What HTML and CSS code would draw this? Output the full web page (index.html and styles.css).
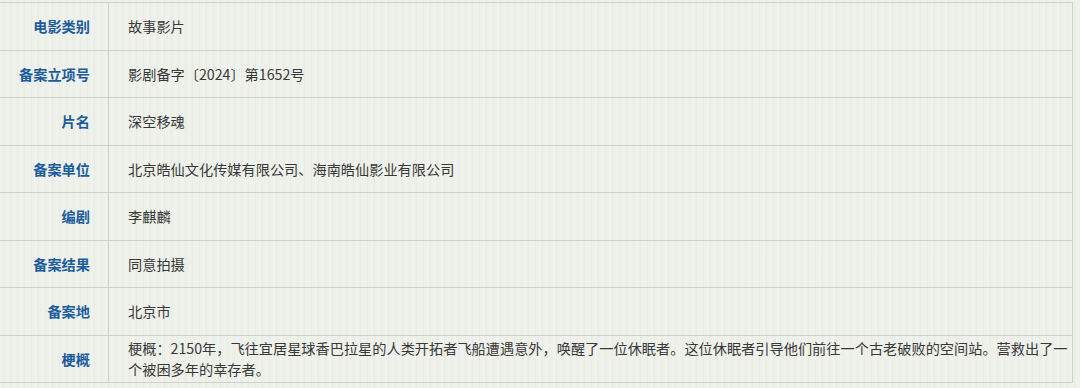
FILE: index.html
```html
<!DOCTYPE html>
<html lang="zh-CN">
<head>
<meta charset="utf-8">
<title>电影备案信息</title>
<link rel="stylesheet" href="styles.css">
</head>
<body>
<div class="page">
  <table class="info">
    <tbody>
      <tr><th class="label">电影类别</th><td class="value">故事影片</td></tr>
      <tr><th class="label">备案立项号</th><td class="value">影剧备字〔2024〕第1652号</td></tr>
      <tr><th class="label">片名</th><td class="value">深空移魂</td></tr>
      <tr><th class="label">备案单位</th><td class="value">北京皓仙文化传媒有限公司、海南皓仙影业有限公司</td></tr>
      <tr><th class="label">编剧</th><td class="value">李麒麟</td></tr>
      <tr><th class="label">备案结果</th><td class="value">同意拍摄</td></tr>
      <tr><th class="label">备案地</th><td class="value">北京市</td></tr>
      <tr><th class="label">梗概</th><td class="value">梗概：2150年，飞往宜居星球香巴拉星的人类开拓者飞船遭遇意外，唤醒了一位休眠者。这位休眠者引导他们前往一个古老破败的空间站。营救出了一个被困多年的幸存者。</td></tr>
    </tbody>
  </table>
</div>
</body>
</html>
```

FILE: styles.css
```css
html, body {
  margin: 0;
  padding: 0;
}

body {
  width: 1080px;
  height: 388px;
  overflow: hidden;
  background-color: #eef0ea;
  background-image:
    repeating-linear-gradient(90deg,
      rgba(255,255,255,0.18) 0px, rgba(255,255,255,0.18) 1px,
      rgba(0,0,0,0) 1px, rgba(0,0,0,0) 3px,
      rgba(200,205,195,0.12) 3px, rgba(200,205,195,0.12) 4px,
      rgba(0,0,0,0) 4px, rgba(0,0,0,0) 7px);
  font-family: "Noto Sans CJK SC", "Liberation Sans", sans-serif;
}

.page {
  padding-top: 2px;
  margin-left: -1px;
}

.info {
  border-collapse: collapse;
  width: 1074px;
  table-layout: fixed;
  font-size: 14.2px;
  line-height: 21px;
}

.info tr {
  height: 47.5px;
}

.info th,
.info td {
  border: 1px solid #cfd0cc;
  vertical-align: middle;
}

.label {
  width: 90px;
  padding: 1px 18px 0 0;
  text-align: right;
  color: #1c5c9c;
  font-weight: 700;
}

.value {
  padding: 1px 1px 0 19px;
  text-align: left;
  color: #383838;
  font-weight: 400;
}
```
